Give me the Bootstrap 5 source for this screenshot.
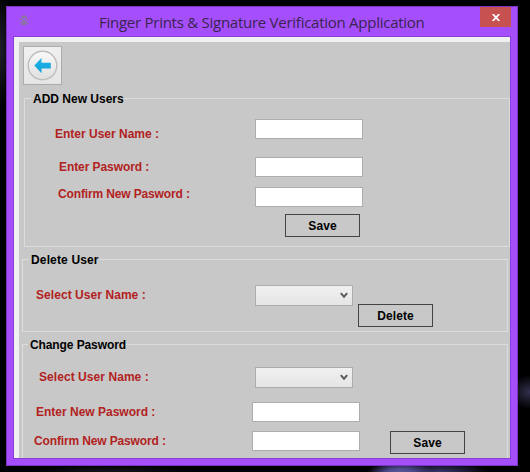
<!DOCTYPE html>
<html lang="en">
<head>
<meta charset="utf-8">
<meta name="viewport" content="width=device-width, initial-scale=1">
<title>Finger Prints &amp; Signature Verification Application</title>
<link href="https://cdn.jsdelivr.net/npm/bootstrap@5.3.0/dist/css/bootstrap.min.css" rel="stylesheet">
<style>
  body {
    width: 530px; height: 472px; padding: 6px 12px 6px 6px;
    font-family: "Liberation Sans", Arial, sans-serif; font-size: 12px; line-height: 15px;
    background:
      radial-gradient(ellipse 34px 13px at 400px 474px, #6462a8 0, #4a4888 45%, transparent 100%),
      radial-gradient(ellipse 50px 10px at 440px 472px, #3a386c, transparent),
      radial-gradient(ellipse 22px 17px at 530px 392px, #30304e, transparent),
      radial-gradient(ellipse 12px 60px at 0 50px, #20202c, transparent),
      radial-gradient(ellipse 90px 10px at 110px 474px, #181822, transparent),
      #000;
  }
  .app-window { width: 512px; height: 460px; background: #a54ffc; border: 1px solid #7c35c4; padding: 0 6px 6px; }
  .title-bar { height: 29px; }
  .print-icon { width: 10px; height: 12px; margin: 8px 0 0 6px; }
  .title-text { font-family: "Open Sans", "Noto Sans", sans-serif; font-size: 15px; line-height: 20px; color: #3a2450; margin: 5px 0 0 70px; white-space: nowrap; width: 327px; letter-spacing: -.26px; }
  .close-box { width: 31px; height: 20px; background: #c75050; border-radius: 0; margin-left: auto; padding-left: 1px !important; }
  .client { height: 423px; border: 1px solid #8a3fd8; background: #f0f0f0; padding: 5px 0 0 5px; }
  .form-area { background: #c8c8c8; height: 416px; padding: 4px 0 0 3px; }
  .back-box { width: 39px; height: 39px; background: linear-gradient(#f0f0f0, #e5e5e5); border: 1px solid #acacac; margin-left: 1px; }
  .group { border: 1px solid #dcdcdc; width: 486px; }
  .group-a { margin: 13px 0 0 2px; height: 149px; }
  .group-b { margin-top: 12px; height: 73px; }
  .group-c { margin-top: 12px; height: 114px; border-bottom: 0; }
  .group-title { float: none; width: max-content; height: 15px; margin: -7px 0 -1px 6px; padding: 0 0 0 2px; background: #c8c8c8; color: #000; font-size: 12px; line-height: 15px; font-weight: 700; white-space: nowrap; }
  .t2 { letter-spacing: .15px; }
  .t3 { letter-spacing: -.1px; margin-left: 5px; }
  .caption { color: #b22222; font-weight: 700; white-space: nowrap; line-height: 15px; flex: none; }
  .entry { width: 108px; height: 20px; min-height: 0; padding: 0 3px; font-size: 12px; border: 1px solid #abadb3; border-radius: 0; background: #fff; }
  .combo { width: 98px; height: 21px; background: linear-gradient(#f0f0f0, #e5e5e5); border: 1px solid #acacac; padding-right: 4px; }
  .flat { width: 75px; height: 23px; padding: 0; border: 1px solid #444; border-radius: 0; color: #000; font-size: 12px; line-height: 20px; font-weight: 700; letter-spacing: .1px; background: #c8c8c8; }
  .r1 { margin-top: 13px; padding-left: 30px; } .r1 .caption { width: 200px; padding-top: 8px; height: 20px; }
  .r2 { margin-top: 18px; padding-left: 34px; } .r2 .caption { width: 196px; padding-top: 3px; letter-spacing: -.08px; }
  .r3 { margin-top: 10px; padding-left: 33px; } .r3 .caption { width: 197px; letter-spacing: -.14px; }
  .r4 { margin: 7px 0 0 260px; }
  .r5 { margin-top: 18px; padding-left: 13px; } .r5 .caption { width: 219px; padding-top: 3px; letter-spacing: .06px; }
  .r5 .flat { margin: 19px 0 0 5px; }
  .r6 { margin-top: 15px; padding-left: 16px; } .r6 .caption { width: 216px; padding-top: 3px; letter-spacing: .06px; }
  .r7 { margin-top: 14px; padding-left: 13px; } .r7 .caption { width: 216px; padding-top: 3px; }
  .r8 { margin-top: 9px; padding-left: 11px; } .r8 .caption { width: 218px; padding-top: 3px; letter-spacing: -.14px; }
  .r8 .flat { margin-left: 30px; }
</style>
<script src="https://cdn.jsdelivr.net/npm/bootstrap@5.3.0/dist/js/bootstrap.bundle.min.js"></script>
</head>
<body class="m-0 overflow-hidden">
<main class="app-window">
  <header class="title-bar d-flex align-items-start">
    <svg class="print-icon flex-shrink-0" viewBox="0 0 10 12" fill="none" stroke="#857e8c" stroke-width="1.3" stroke-dasharray="2.4 .5"><path d="M3 2.5l2-2 3 2M1 5l2-2 3-.5 3 2M1 8l3-2h3l2 3M3 10l1-2h2l1 2M5 5v6"/></svg>
    <div class="title-text">Finger Prints &amp; Signature Verification Application</div>
    <button class="close-box btn border-0 p-0 d-flex align-items-center justify-content-center" aria-label="Close">
      <svg width="8" height="7" viewBox="0 0 8 7" stroke="#fff" stroke-width="1.8"><path d="M.7 0l6.6 7M7.3 0L.7 7"/></svg>
    </button>
  </header>
  <section class="client overflow-hidden">
    <div class="form-area">
      <button class="back-box btn rounded-0 p-0 d-flex align-items-center justify-content-center" aria-label="Back">
        <svg width="31" height="31" viewBox="0 0 31 31"><defs><linearGradient id="ring" x2="0" y2="1"><stop stop-color="#fafafa"/><stop offset="1" stop-color="#dfdfdf"/></linearGradient><linearGradient id="blue" x2="0" y2="1"><stop stop-color="#21b4e8"/><stop offset="1" stop-color="#10a0d8"/></linearGradient></defs><circle cx="15.5" cy="15.5" r="14.3" fill="url(#ring)" stroke="#bdbdbd" stroke-width="1.4"/><path d="M7.3 15.5L14.5 8v4.8h9.3v5.6h-9.3v4.8z" fill="url(#blue)"/></svg>
      </button>
      <fieldset class="group group-a">
        <h2 class="group-title t1">ADD New Users</h2>
        <div class="r1 d-flex"><label class="caption" for="u">Enter User Name :</label><input id="u" class="entry form-control"></div>
        <div class="r2 d-flex"><label class="caption" for="p">Enter Pasword :</label><input id="p" class="entry form-control"></div>
        <div class="r3 d-flex"><label class="caption" for="c">Confirm New Pasword :</label><input id="c" class="entry form-control"></div>
        <div class="r4 d-flex"><button class="flat btn">Save</button></div>
      </fieldset>
      <fieldset class="group group-b">
        <h2 class="group-title t2">Delete User</h2>
        <div class="r5 d-flex align-items-start"><span class="caption">Select User Name :</span>
          <div class="combo d-flex align-items-center justify-content-end"><svg width="8" height="7" viewBox="0 0 8 7" fill="none" stroke="#5a5a5a" stroke-width="2"><path d="M.8 1.2L4 4.7l3.2-3.5"/></svg></div>
          <button class="flat btn">Delete</button></div>
      </fieldset>
      <fieldset class="group group-c">
        <h2 class="group-title t3">Change Pasword</h2>
        <div class="r6 d-flex"><span class="caption">Select User Name :</span>
          <div class="combo d-flex align-items-center justify-content-end"><svg width="8" height="7" viewBox="0 0 8 7" fill="none" stroke="#5a5a5a" stroke-width="2"><path d="M.8 1.2L4 4.7l3.2-3.5"/></svg></div></div>
        <div class="r7 d-flex"><label class="caption" for="n">Enter New Pasword :</label><input id="n" class="entry form-control"></div>
        <div class="r8 d-flex"><label class="caption" for="m">Confirm New Pasword :</label><input id="m" class="entry form-control"><button class="flat btn">Save</button></div>
      </fieldset>
    </div>
  </section>
</main>
</body>
</html>
